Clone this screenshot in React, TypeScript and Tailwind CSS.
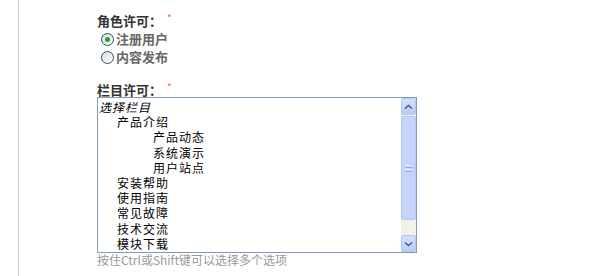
import type { ReactNode } from "react";

const font = { fontFamily: '"Noto Sans CJK SC", "Liberation Sans", sans-serif' };

const options: { text: string; indent: string; italic?: boolean }[] = [
  { text: "选择栏目", indent: "pl-[1px]", italic: true },
  { text: "产品介绍", indent: "pl-[19px]" },
  { text: "产品动态", indent: "pl-[55px]" },
  { text: "系统演示", indent: "pl-[55px]" },
  { text: "用户站点", indent: "pl-[55px]" },
  { text: "安装帮助", indent: "pl-[19px]" },
  { text: "使用指南", indent: "pl-[19px]" },
  { text: "常见故障", indent: "pl-[19px]" },
  { text: "技术交流", indent: "pl-[19px]" },
  { text: "模块下载", indent: "pl-[19px]" },
];

function Label({ children }: { children: ReactNode }) {
  return (
    <div className="flex h-[18px] items-center text-[13px] font-bold text-[#333]">
      {children}
      <span className="ml-[5px] -mt-[7px] text-[10px] leading-[10px] font-normal text-[#f60]">*</span>
    </div>
  );
}

function Radio({ checked, label }: { checked?: boolean; label: string }) {
  return (
    <label className="flex h-[18px] items-center pl-[4px] text-[13px] font-bold text-[#666]">
      <span className="flex h-[13px] w-[13px] items-center justify-center rounded-full border border-[#1c5180] bg-gradient-to-br from-[#dcdcd6] to-white">
        {checked && <span className="h-[5px] w-[5px] rounded-full bg-[#21a121]" />}
      </span>
      <span className="ml-[2px]">{label}</span>
    </label>
  );
}

function ScrollButton({ down }: { down?: boolean }) {
  return (
    <div className="flex h-[17px] items-center justify-center rounded-[2px] border border-[#b4c8f6] bg-gradient-to-b from-[#d4e0fd] to-[#b9cbf7]">
      <svg width="9" height="6" viewBox="0 0 9 6">
        <path
          d={down ? "M1 1.5 L4.5 4.5 L8 1.5" : "M1 4.5 L4.5 1.5 L8 4.5"}
          fill="none"
          stroke="#4d6185"
          strokeWidth="1.6"
        />
      </svg>
    </div>
  );
}

export default function App() {
  return (
    <div className="h-[276px] w-[600px] bg-white" style={font}>
      <div className="ml-[18px] h-full border-l border-[#c8c8c8] pl-[78px] pt-[12px]">
        <Label>角色许可：</Label>
        <Radio checked label="注册用户" />
        <Radio label="内容发布" />

        <div className="mt-[15px]">
          <Label>栏目许可：</Label>
        </div>

        <div className="mt-[-2px] flex h-[156px] w-[320px] border border-[#7f9db9] bg-white">
          <div className="flex-1 pt-[1px] text-[12px] leading-[15.2px] tracking-[1px] text-black">
            {options.map((o) => (
              <div key={o.text} className={`${o.indent} ${o.italic ? "italic" : ""}`}>
                {o.text}
              </div>
            ))}
          </div>
          <div className="flex w-[15px] flex-col bg-[#f3f1ec]">
            <ScrollButton />
            <div className="mt-[1px] flex h-[104px] items-center justify-center rounded-[2px] border border-[#b4c8f6] bg-[#c4d4fc]">
              <div className="flex flex-col gap-[1px]">
                <span className="h-px w-[7px] bg-[#eef3fe]" />
                <span className="h-px w-[7px] bg-[#8ca5e0]" />
                <span className="h-px w-[7px] bg-[#eef3fe]" />
                <span className="h-px w-[7px] bg-[#8ca5e0]" />
              </div>
            </div>
            <div className="flex-1" />
            <ScrollButton down />
          </div>
        </div>

        <div className="flex h-[14px] items-center text-[12px] text-[#999]">
          按住Ctrl或Shift键可以选择多个选项
        </div>
      </div>
    </div>
  );
}
